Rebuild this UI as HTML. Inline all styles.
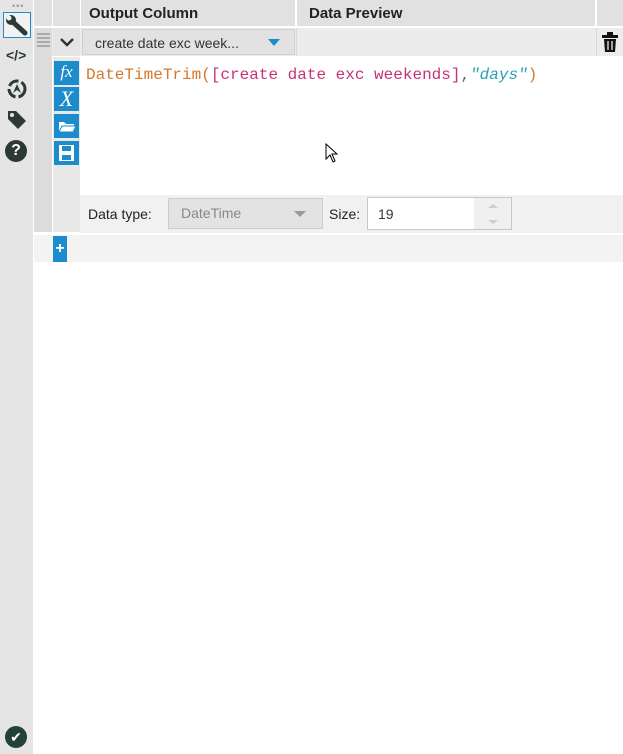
<!DOCTYPE html><html><head><style>
body{margin:0;width:623px;height:754px;position:relative;background:#fff;font-family:"Liberation Sans",sans-serif;overflow:hidden}
.a{position:absolute}
.hd{background:#e1e1e1}
.bi{position:absolute;left:54px;width:25px;height:24px;background:#1d8ccc;color:#fff;text-align:center}
.mono{font-family:"Liberation Mono",monospace;font-size:16px}
</style></head><body>
<div class="a" style="left:0;top:0;width:33px;height:754px;background:#e5e5e5"></div>
<div class="a" style="left:12px;top:1px;color:#999;font-size:9px;letter-spacing:1px">•••</div>
<div class="a" style="left:3px;top:12px;width:26px;height:24px;border:1px solid #1d8ccc;background:#f2f2f2"></div>
<svg class="a" style="left:5px;top:14px" width="24" height="22" viewBox="0 0 24 22"><path d="M4 4 L10 10 M9 9 L20 19" stroke="#2b3a36" stroke-width="5" stroke-linecap="round"/><circle cx="6" cy="6" r="5" fill="#2b3a36"/><circle cx="4" cy="4" r="2.5" fill="#f2f2f2"/></svg>
<div class="a" style="left:6px;top:47px;font-weight:bold;font-size:14px;color:#2b3a36">&lt;/&gt;</div>
<svg class="a" style="left:5px;top:78px" width="24" height="22"><circle cx="12" cy="11" r="8" fill="none" stroke="#2b3a36" stroke-width="3" stroke-dasharray="11 3"/><path d="M8 15 L12 6 L16 15 L12 12Z" fill="#2b3a36"/></svg>
<svg class="a" style="left:5px;top:108px" width="24" height="24"><path d="M3 3 H11 L21 13 L13 21 L3 11Z" fill="#2b3a36"/><circle cx="7" cy="7" r="2" fill="#e5e5e5"/></svg>
<div class="a" style="left:5px;top:140px;width:22px;height:22px;border-radius:50%;background:#2b3a36;color:#fff;font-weight:bold;font-size:16px;text-align:center;line-height:22px">?</div>
<div class="a" style="left:5px;top:726px;width:22px;height:22px;border-radius:50%;background:#23413a;color:#fff;font-size:14px;text-align:center;line-height:22px">✔</div>
<div class="a hd" style="left:34px;top:0;width:18px;height:26px"></div>
<div class="a hd" style="left:53px;top:0;width:27px;height:26px"></div>
<div class="a hd" style="left:81px;top:0;width:214px;height:26px"></div>
<div class="a hd" style="left:297px;top:0;width:298px;height:26px"></div>
<div class="a hd" style="left:597px;top:0;width:26px;height:26px"></div>
<div class="a" style="left:89px;top:5px;font-weight:bold;font-size:15px;color:#222">Output Column</div>
<div class="a" style="left:309px;top:5px;font-weight:bold;font-size:15px;color:#222">Data Preview</div>
<div class="a" style="left:34px;top:28px;width:589px;height:28px;background:#ececec"></div>
<div class="a" style="left:34px;top:28px;width:18px;height:204px;background:#dcdcdc"></div>
<div class="a" style="left:37px;top:33px;width:13px;height:16px;background:repeating-linear-gradient(#aaa 0 2px,transparent 2px 4px)"></div>
<div class="a" style="left:53px;top:28px;width:27px;height:28px;background:#e4e4e4"></div>
<svg class="a" style="left:59px;top:37px" width="16" height="10"><path d="M2 2 L8 8 L14 2" fill="none" stroke="#333" stroke-width="2.5"/></svg>
<div class="a" style="left:82px;top:29px;width:213px;height:26px;background:#e2e2e2;border:1px solid #d0d0d0;box-sizing:border-box"></div>
<div class="a" style="left:95px;top:35px;font-size:14px;color:#333">create date exc week...</div>
<div class="a" style="left:268px;top:39px;width:0;height:0;border-left:6px solid transparent;border-right:6px solid transparent;border-top:7px solid #1d8ccc"></div>
<div class="a" style="left:296px;top:28px;width:1px;height:28px;background:#d8d8d8"></div>
<div class="a" style="left:596px;top:28px;width:1px;height:28px;background:#d8d8d8"></div>
<svg class="a" style="left:601px;top:31px" width="18" height="22"><rect x="1" y="4" width="16" height="3" fill="#111"/><rect x="6" y="1" width="6" height="4" fill="#111"/><path d="M3 8 H15 L14 21 H4Z" fill="#111"/><path d="M7 10 V19 M11 10 V19" stroke="#eee" stroke-width="1.3"/></svg>
<div class="a" style="left:53px;top:57px;width:27px;height:175px;background:#e8e8e8"></div>
<div class="bi" style="top:61px;font-family:'Liberation Serif',serif;font-style:italic;font-size:17px;line-height:22px">fx</div>
<div class="bi" style="top:87px;font-family:'Liberation Serif',serif;font-style:italic;font-size:22px;line-height:24px">X</div>
<div class="bi" style="top:114px"><svg width="25" height="24"><path d="M5 8 H10 L12 10 H20 V18 H5Z" fill="#fff"/><path d="M5 18 L8 12 H22 L19 18Z" fill="#fff" stroke="#1d8ccc"/></svg></div>
<div class="bi" style="top:141px"><svg width="25" height="24"><rect x="5" y="4" width="15" height="16" fill="#fff"/><rect x="8" y="5" width="9" height="5" fill="#1d8ccc"/><rect x="8" y="14" width="9" height="5" fill="#1d8ccc"/></svg></div>
<div class="a mono" style="left:86px;top:66px;color:#d4782a">DateTimeTrim(<span style="color:#c6327a">[create date exc weekends]</span><span style="color:#666">,</span><span style="color:#2aa1b3;font-style:italic">"days"</span><span style="color:#d4782a">)</span></div>
<svg class="a" style="left:325px;top:143px" width="14" height="20"><path d="M1 1 V16 L5 12 L8 19 L10 18 L7 11 L12 11Z" fill="#fff" stroke="#000"/></svg>
<div class="a" style="left:80px;top:195px;width:543px;height:38px;background:#f1f1f1"></div>
<div class="a" style="left:88px;top:206px;font-size:14px;color:#222">Data type:</div>
<div class="a" style="left:168px;top:198px;width:155px;height:31px;background:#e3e3e3;border:1px solid #ccc;box-sizing:border-box"></div>
<div class="a" style="left:181px;top:205px;font-size:14px;color:#888">DateTime</div>
<div class="a" style="left:294px;top:211px;width:0;height:0;border-left:6px solid transparent;border-right:6px solid transparent;border-top:6px solid #999"></div>
<div class="a" style="left:329px;top:206px;font-size:14px;color:#222">Size:</div>
<div class="a" style="left:367px;top:197px;width:145px;height:33px;background:#fff;border:1px solid #c8c8c8;box-sizing:border-box"></div>
<div class="a" style="left:474px;top:198px;width:37px;height:31px;background:#f0f0f0"></div>
<div class="a" style="left:488px;top:204px;width:0;height:0;border-left:5px solid transparent;border-right:5px solid transparent;border-bottom:4px solid #ccc"></div>
<div class="a" style="left:488px;top:220px;width:0;height:0;border-left:5px solid transparent;border-right:5px solid transparent;border-top:4px solid #ccc"></div>
<div class="a" style="left:378px;top:206px;font-size:14px;color:#333">19</div>
<div class="a" style="left:34px;top:235px;width:589px;height:27px;background:#f3f3f3"></div>
<div class="a" style="left:53px;top:236px;width:14px;height:26px;background:#1d8ccc;color:#fff;font-weight:bold;font-size:16px;text-align:center;line-height:25px">+</div>
</body></html>
